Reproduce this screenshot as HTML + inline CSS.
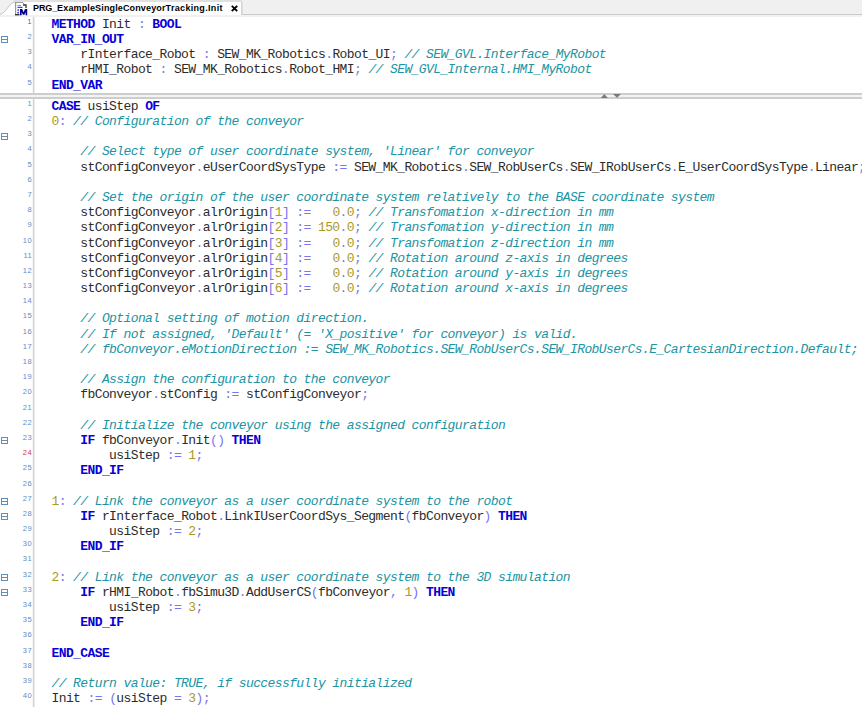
<!DOCTYPE html>
<html><head><meta charset="utf-8"><style>
html,body{margin:0;padding:0;}
body{width:862px;height:707px;overflow:hidden;background:#fff;position:relative;font-family:"Liberation Mono",monospace;}
#tabbar{position:absolute;left:0;top:0;width:862px;height:15px;background:#f0f0f0;}
#tabline{position:absolute;left:0;top:15px;width:862px;height:2px;background:#f1f1f1;}
.ed{position:absolute;left:0;width:862px;overflow:hidden;background:#fff;}
.gl{position:absolute;left:33px;top:0;width:1px;height:100%;background:#d2d2d2;box-shadow:-1px 0 0 #f6f6f6, 1px 0 0 #ececec;}
.split{position:absolute;left:0;width:862px;height:2px;background:#cdcdcd;}
.cl{position:absolute;left:51.5px;white-space:pre;font-size:13px;line-height:15.18px;height:15.18px;letter-spacing:-0.6px;color:#2c2c2c;}
.cl b{color:#0800d8;font-weight:bold;}
.cl i{font-style:normal;}
.cl i.p{color:#7676ee;}
.cl i.n{color:#aa9a28;}
.cl em{color:#2094a2;font-style:italic;}
.ln{position:absolute;left:0;width:32px;text-align:right;font-family:"Liberation Sans",sans-serif;font-size:7.5px;line-height:10px;letter-spacing:0.4px;color:#5c8cc8;}
.ln.red{color:#d03838;}
.fold{position:absolute;left:0px;}
</style></head><body>
<div id="tabbar"></div>
<div style="position:absolute;left:14px;top:0;width:228px;height:2px;background:#e0e0e0"></div>
<div style="position:absolute;left:242px;top:14px;width:620px;height:1px;background:#cacaca"></div>
<svg style="position:absolute;left:0;top:0" width="262" height="17">
<path d="M-1,15 C6,15 9,2 15,2 L241.5,2 L241.5,15 Z" fill="#ffffff"/>
<path d="M-1,14.5 C6,14.5 9,2 15,2" fill="none" stroke="#c4c4c4" stroke-width="1"/>
<rect x="241" y="2" width="1.5" height="13" fill="#d2d2d2"/>
</svg>
<div id="tabline"></div>
<svg style="position:absolute;left:13px;top:0" width="18" height="17">
<rect x="2" y="2.5" width="1.2" height="12" fill="#9a9a9a"/>
<rect x="2" y="2" width="8" height="1" fill="#9a9a9a"/>
<path d="M9.5,2.5 L12.5,5.5" stroke="#8a8a8a" stroke-width="1"/>
<path d="M10,5 L13,5 L13,8" stroke="#404040" stroke-width="1.4" fill="none"/>
<rect x="2" y="14" width="4.5" height="1.4" fill="#303030"/>
<rect x="4.5" y="5" width="3.5" height="1" fill="#8080ff"/>
<rect x="4.5" y="6.8" width="5" height="1.2" fill="#3a3aff"/>
<rect x="4.4" y="9.2" width="1.6" height="1.8" fill="#5a5aff"/>
<rect x="4.4" y="11.8" width="1.6" height="1.8" fill="#3a3aff"/>
<path d="M7,15.3 L7,8.9 L9.2,8.9 L10.6,12.2 L12,8.9 L14.2,8.9 L14.2,15.3 L12.6,15.3 L12.6,12 L11.4,14.8 L9.8,14.8 L8.6,12 L8.6,15.3 Z" fill="#000088"/>
</svg>
<div style="position:absolute;left:33px;top:1.5px;font-family:'Liberation Sans',sans-serif;font-weight:bold;font-size:9px;line-height:13px;color:#000;"><span style="letter-spacing:-0.1px">PRG_</span><span style="letter-spacing:0.14px">ExampleSingleConveyor</span><span style="letter-spacing:0.32px">Tracking.Init</span></div>
<svg style="position:absolute;left:231px;top:5px" width="7" height="7"><path d="M0.8,0.8 L6.2,6.2 M6.2,0.8 L0.8,6.2" stroke="#000" stroke-width="1.9"/></svg>
<div class="ed" style="top:17px;height:76px;"><div class="gl"></div></div>
<div class="split" style="top:93px"></div>
<div style="position:absolute;left:0;top:95px;width:862px;height:2px;background:#f3f3f3"></div>
<div class="split" style="top:97px"></div>
<svg style="position:absolute;left:598px;top:92px" width="26" height="8"><path d="M2.8,6 L6.3,2 L9.8,6 Z" fill="#7a7a7a"/><path d="M15,2 L23,2 L19,5.8 Z" fill="#7a7a7a"/></svg>
<div class="ed" style="top:99px;height:608px;"><div class="gl"></div></div>
<div class="ln red" style="top:17.00px">1</div>
<div class="cl" style="top:17.00px"><b>METHOD</b> Init <i class="p">:</i> <b>BOOL</b></div>
<div class="ln" style="top:32.00px">2</div>
<svg class="fold" style="top:35.00px" width="10" height="10"><rect x="1.5" y="1.5" width="6" height="6" fill="none" stroke="#5b8fc0" stroke-width="1"/><path d="M1.5,4.5 L7.5,4.5" stroke="#5b8fc0" stroke-width="1"/></svg>
<div class="cl" style="top:32.00px"><b>VAR_IN_OUT</b></div>
<div class="ln" style="top:47.00px">3</div>
<div class="cl" style="top:47.00px">    rInterface_Robot <i class="p">:</i> SEW_MK_Robotics<i class="p">.</i>Robot_UI<i class="p">;</i> <em>// SEW_GVL.Interface_MyRobot</em></div>
<div class="ln" style="top:62.00px">4</div>
<div class="cl" style="top:62.00px">    rHMI_Robot <i class="p">:</i> SEW_MK_Robotics<i class="p">.</i>Robot_HMI<i class="p">;</i> <em>// SEW_GVL_Internal.HMI_MyRobot</em></div>
<div class="ln" style="top:78.00px">5</div>
<div class="cl" style="top:78.00px"><b>END_VAR</b></div>
<div class="ln" style="top:99.00px">1</div>
<div class="cl" style="top:99.00px"><b>CASE</b> usiStep <b>OF</b></div>
<div class="ln" style="top:114.00px">2</div>
<div class="cl" style="top:114.00px"><i class="n">0</i><i class="p">:</i> <em>// Configuration of the conveyor</em></div>
<div class="ln" style="top:129.00px">3</div>
<svg class="fold" style="top:132.00px" width="10" height="10"><rect x="1.5" y="1.5" width="6" height="6" fill="none" stroke="#5b8fc0" stroke-width="1"/><path d="M1.5,4.5 L7.5,4.5" stroke="#5b8fc0" stroke-width="1"/></svg>
<div class="ln" style="top:144.00px">4</div>
<div class="cl" style="top:144.00px">    <em>// Select type of user coordinate system, &#x27;Linear&#x27; for conveyor</em></div>
<div class="ln" style="top:160.00px">5</div>
<div class="cl" style="top:160.00px">    stConfigConveyor<i class="p">.</i>eUserCoordSysType <i class="p">:=</i> SEW_MK_Robotics<i class="p">.</i>SEW_RobUserCs<i class="p">.</i>SEW_IRobUserCs<i class="p">.</i>E_UserCoordSysType<i class="p">.</i>Linear<i class="p">;</i></div>
<div class="ln" style="top:175.00px">6</div>
<div class="ln" style="top:190.00px">7</div>
<div class="cl" style="top:190.00px">    <em>// Set the origin of the user coordinate system relatively to the BASE coordinate system</em></div>
<div class="ln" style="top:205.00px">8</div>
<div class="cl" style="top:205.00px">    stConfigConveyor<i class="p">.</i>alrOrigin<i class="p">[</i><i class="n">1</i><i class="p">]</i> <i class="p">:=</i>   <i class="n">0</i><i class="p">.</i><i class="n">0</i><i class="p">;</i> <em>// Transfomation x-direction in mm</em></div>
<div class="ln" style="top:220.00px">9</div>
<div class="cl" style="top:220.00px">    stConfigConveyor<i class="p">.</i>alrOrigin<i class="p">[</i><i class="n">2</i><i class="p">]</i> <i class="p">:=</i> <i class="n">150</i><i class="p">.</i><i class="n">0</i><i class="p">;</i> <em>// Transfomation y-direction in mm</em></div>
<div class="ln" style="top:236.00px">10</div>
<div class="cl" style="top:236.00px">    stConfigConveyor<i class="p">.</i>alrOrigin<i class="p">[</i><i class="n">3</i><i class="p">]</i> <i class="p">:=</i>   <i class="n">0</i><i class="p">.</i><i class="n">0</i><i class="p">;</i> <em>// Transfomation z-direction in mm</em></div>
<div class="ln" style="top:251.00px">11</div>
<div class="cl" style="top:251.00px">    stConfigConveyor<i class="p">.</i>alrOrigin<i class="p">[</i><i class="n">4</i><i class="p">]</i> <i class="p">:=</i>   <i class="n">0</i><i class="p">.</i><i class="n">0</i><i class="p">;</i> <em>// Rotation around z-axis in degrees</em></div>
<div class="ln" style="top:266.00px">12</div>
<div class="cl" style="top:266.00px">    stConfigConveyor<i class="p">.</i>alrOrigin<i class="p">[</i><i class="n">5</i><i class="p">]</i> <i class="p">:=</i>   <i class="n">0</i><i class="p">.</i><i class="n">0</i><i class="p">;</i> <em>// Rotation around y-axis in degrees</em></div>
<div class="ln" style="top:281.00px">13</div>
<div class="cl" style="top:281.00px">    stConfigConveyor<i class="p">.</i>alrOrigin<i class="p">[</i><i class="n">6</i><i class="p">]</i> <i class="p">:=</i>   <i class="n">0</i><i class="p">.</i><i class="n">0</i><i class="p">;</i> <em>// Rotation around x-axis in degrees</em></div>
<div class="ln" style="top:296.00px">14</div>
<div class="ln" style="top:311.00px">15</div>
<div class="cl" style="top:311.00px">    <em>// Optional setting of motion direction.</em></div>
<div class="ln" style="top:327.00px">16</div>
<div class="cl" style="top:327.00px">    <em>// If not assigned, &#x27;Default&#x27; (= &#x27;X_positive&#x27; for conveyor) is valid.</em></div>
<div class="ln" style="top:342.00px">17</div>
<div class="cl" style="top:342.00px">    <em>// fbConveyor.eMotionDirection := SEW_MK_Robotics.SEW_RobUserCs.SEW_IRobUserCs.E_CartesianDirection.Default;</em></div>
<div class="ln" style="top:357.00px">18</div>
<div class="ln" style="top:372.00px">19</div>
<div class="cl" style="top:372.00px">    <em>// Assign the configuration to the conveyor</em></div>
<div class="ln" style="top:387.00px">20</div>
<div class="cl" style="top:387.00px">    fbConveyor<i class="p">.</i>stConfig <i class="p">:=</i> stConfigConveyor<i class="p">;</i></div>
<div class="ln" style="top:403.00px">21</div>
<div class="ln" style="top:418.00px">22</div>
<div class="cl" style="top:418.00px">    <em>// Initialize the conveyor using the assigned configuration</em></div>
<div class="ln" style="top:433.00px">23</div>
<svg class="fold" style="top:436.00px" width="10" height="10"><rect x="1.5" y="1.5" width="6" height="6" fill="none" stroke="#5b8fc0" stroke-width="1"/><path d="M1.5,4.5 L7.5,4.5" stroke="#5b8fc0" stroke-width="1"/></svg>
<div class="cl" style="top:433.00px">    <b>IF</b> fbConveyor<i class="p">.</i>Init<i class="p">(</i><i class="p">)</i> <b>THEN</b></div>
<div class="ln red" style="top:448.00px">24</div>
<div class="cl" style="top:448.00px">        usiStep <i class="p">:=</i> <i class="n">1</i><i class="p">;</i></div>
<div class="ln" style="top:463.00px">25</div>
<div class="cl" style="top:463.00px">    <b>END_IF</b></div>
<div class="ln" style="top:479.00px">26</div>
<div class="ln" style="top:494.00px">27</div>
<svg class="fold" style="top:497.00px" width="10" height="10"><rect x="1.5" y="1.5" width="6" height="6" fill="none" stroke="#5b8fc0" stroke-width="1"/><path d="M1.5,4.5 L7.5,4.5" stroke="#5b8fc0" stroke-width="1"/></svg>
<div class="cl" style="top:494.00px"><i class="n">1</i><i class="p">:</i> <em>// Link the conveyor as a user coordinate system to the robot</em></div>
<div class="ln" style="top:509.00px">28</div>
<svg class="fold" style="top:512.00px" width="10" height="10"><rect x="1.5" y="1.5" width="6" height="6" fill="none" stroke="#5b8fc0" stroke-width="1"/><path d="M1.5,4.5 L7.5,4.5" stroke="#5b8fc0" stroke-width="1"/></svg>
<div class="cl" style="top:509.00px">    <b>IF</b> rInterface_Robot<i class="p">.</i>LinkIUserCoordSys_Segment<i class="p">(</i>fbConveyor<i class="p">)</i> <b>THEN</b></div>
<div class="ln" style="top:524.00px">29</div>
<div class="cl" style="top:524.00px">        usiStep <i class="p">:=</i> <i class="n">2</i><i class="p">;</i></div>
<div class="ln" style="top:539.00px">30</div>
<div class="cl" style="top:539.00px">    <b>END_IF</b></div>
<div class="ln" style="top:554.00px">31</div>
<div class="ln" style="top:570.00px">32</div>
<svg class="fold" style="top:573.00px" width="10" height="10"><rect x="1.5" y="1.5" width="6" height="6" fill="none" stroke="#5b8fc0" stroke-width="1"/><path d="M1.5,4.5 L7.5,4.5" stroke="#5b8fc0" stroke-width="1"/></svg>
<div class="cl" style="top:570.00px"><i class="n">2</i><i class="p">:</i> <em>// Link the conveyor as a user coordinate system to the 3D simulation</em></div>
<div class="ln" style="top:585.00px">33</div>
<svg class="fold" style="top:588.00px" width="10" height="10"><rect x="1.5" y="1.5" width="6" height="6" fill="none" stroke="#5b8fc0" stroke-width="1"/><path d="M1.5,4.5 L7.5,4.5" stroke="#5b8fc0" stroke-width="1"/></svg>
<div class="cl" style="top:585.00px">    <b>IF</b> rHMI_Robot<i class="p">.</i>fbSimu3D<i class="p">.</i>AddUserCS<i class="p">(</i>fbConveyor<i class="p">,</i> <i class="n">1</i><i class="p">)</i> <b>THEN</b></div>
<div class="ln" style="top:600.00px">34</div>
<div class="cl" style="top:600.00px">        usiStep <i class="p">:=</i> <i class="n">3</i><i class="p">;</i></div>
<div class="ln" style="top:615.00px">35</div>
<div class="cl" style="top:615.00px">    <b>END_IF</b></div>
<div class="ln" style="top:630.00px">36</div>
<div class="ln" style="top:646.00px">37</div>
<div class="cl" style="top:646.00px"><b>END_CASE</b></div>
<div class="ln" style="top:661.00px">38</div>
<div class="ln" style="top:676.00px">39</div>
<div class="cl" style="top:676.00px"><em>// Return value: TRUE, if successfully initialized</em></div>
<div class="ln" style="top:691.00px">40</div>
<div class="cl" style="top:691.00px">Init <i class="p">:=</i> <i class="p">(</i>usiStep <i class="p">=</i> <i class="n">3</i><i class="p">)</i><i class="p">;</i></div>
</body></html>
